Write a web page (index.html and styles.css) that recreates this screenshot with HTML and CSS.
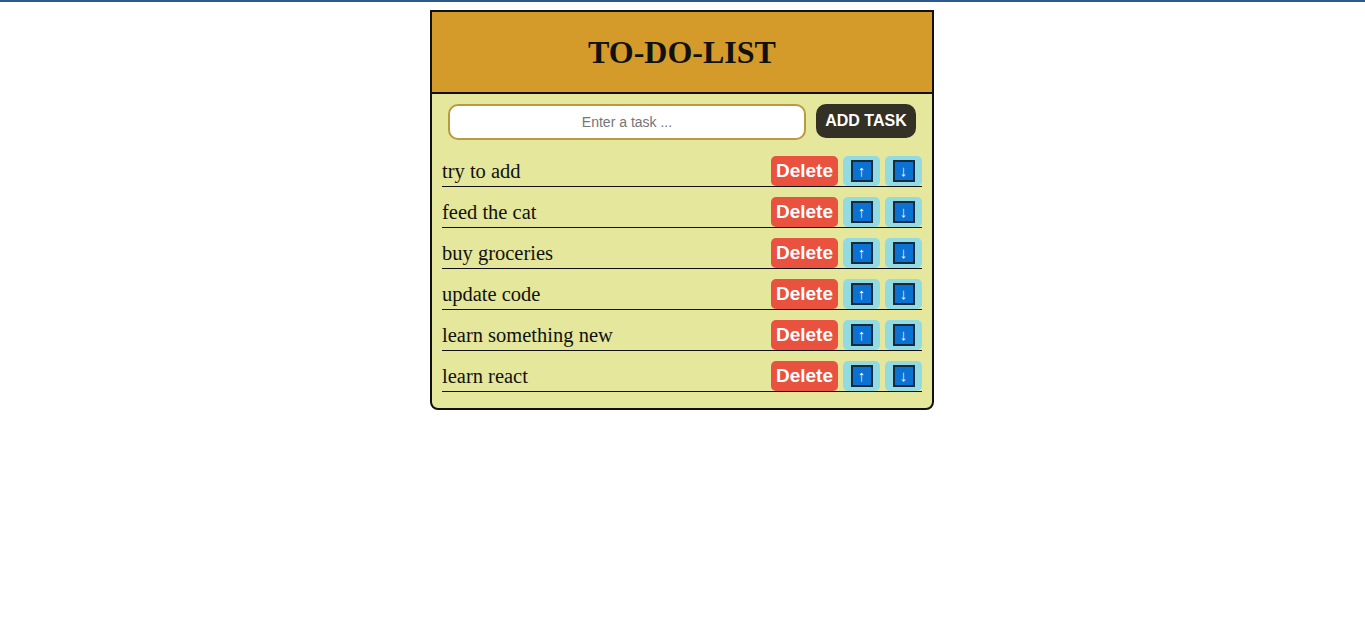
FILE: index.html
```html
<!DOCTYPE html>
<html>
<head>
<meta charset="utf-8">
<link rel="stylesheet" href="styles.css">
</head>
<body>
<div class="topbar"></div>
<div class="page">
<div class="todo">
  <div class="header"><h1>TO-DO-LIST</h1></div>
  <div class="content">
    <div class="add-row">
      <input class="task-input" type="text" placeholder="Enter a task ...">
      <button class="add-btn">ADD TASK</button>
    </div>
    <ol class="list">
      <li class="item"><span class="text">try to add</span><button class="del">Delete</button><button class="move"><span class="arrow">↑</span></button><button class="move"><span class="arrow">↓</span></button></li>
      <li class="item"><span class="text">feed the cat</span><button class="del">Delete</button><button class="move"><span class="arrow">↑</span></button><button class="move"><span class="arrow">↓</span></button></li>
      <li class="item"><span class="text">buy groceries</span><button class="del">Delete</button><button class="move"><span class="arrow">↑</span></button><button class="move"><span class="arrow">↓</span></button></li>
      <li class="item"><span class="text">update code</span><button class="del">Delete</button><button class="move"><span class="arrow">↑</span></button><button class="move"><span class="arrow">↓</span></button></li>
      <li class="item"><span class="text">learn something new</span><button class="del">Delete</button><button class="move"><span class="arrow">↑</span></button><button class="move"><span class="arrow">↓</span></button></li>
      <li class="item"><span class="text">learn react</span><button class="del">Delete</button><button class="move"><span class="arrow">↑</span></button><button class="move"><span class="arrow">↓</span></button></li>
    </ol>
  </div>
</div>
</div>
</body>
</html>
```
FILE: styles.css
```css
html, body {
  margin: 0;
  padding: 0;
  background: #ffffff;
}
body {
  font-family: "Liberation Serif", "Times New Roman", serif;
}
.topbar {
  height: 2px;
  background: #2d5a8e;
}
.page {
  padding-right: 1px;
}
.todo {
  width: 500px;
  margin: 8px auto 0;
  border: 2px solid #111;
  border-radius: 0 0 8px 8px;
  background: #e4e79c;
}
.header {
  height: 80px;
  background: #d49b2b;
  border-bottom: 2px solid #111;
  display: flex;
  align-items: center;
  justify-content: center;
}
.header h1 {
  margin: 0;
  font-size: 32px;
  font-weight: bold;
  color: #111;
  font-family: "Liberation Serif", serif;
}
.content {
  padding: 10px 10px 16px;
}
.add-row {
  display: flex;
  align-items: flex-start;
  gap: 10px;
  padding: 0 6px;
}
.task-input {
  box-sizing: border-box;
  width: 358px;
  height: 36px;
  border: 2px solid #b99a3f;
  border-radius: 10px;
  background: #fff;
  text-align: center;
  font-family: "Liberation Sans", Arial, sans-serif;
  font-size: 14px;
  outline: none;
}
.task-input::placeholder {
  color: #757575;
}
.add-btn {
  height: 34px;
  width: 100px;
  border: none;
  border-radius: 10px;
  background: #333025;
  color: #fff;
  font-family: "Liberation Sans", Arial, sans-serif;
  font-weight: bold;
  font-size: 16px;
  padding: 0;
}
.list {
  list-style: none;
  margin: 16px 0 0;
  padding: 0;
}
.item {
  display: flex;
  align-items: center;
  height: 30px;
  border-bottom: 1px solid #111;
  margin-bottom: 10px;
}
.item:last-child {
  margin-bottom: 0;
}
.text {
  flex: 1;
  font-size: 20.5px;
  color: #111;
}
.del {
  height: 30px;
  width: 67px;
  border: none;
  border-radius: 5px;
  background: #e8523f;
  color: #fff;
  font-family: "Liberation Sans", Arial, sans-serif;
  font-weight: bold;
  font-size: 19px;
  padding: 0;
}
.move {
  height: 30px;
  width: 37px;
  margin-left: 5px;
  border: none;
  border-radius: 5px;
  background: #93dbe3;
  padding: 0;
  display: flex;
  align-items: center;
  justify-content: center;
}
.arrow {
  box-sizing: border-box;
  width: 22px;
  height: 22px;
  border: 2px solid #1b2a3a;
  background: #0a72d2;
  color: #fff;
  font-family: "Liberation Sans", sans-serif;
  font-size: 15px;
  line-height: 18px;
  text-align: center;
}
```
